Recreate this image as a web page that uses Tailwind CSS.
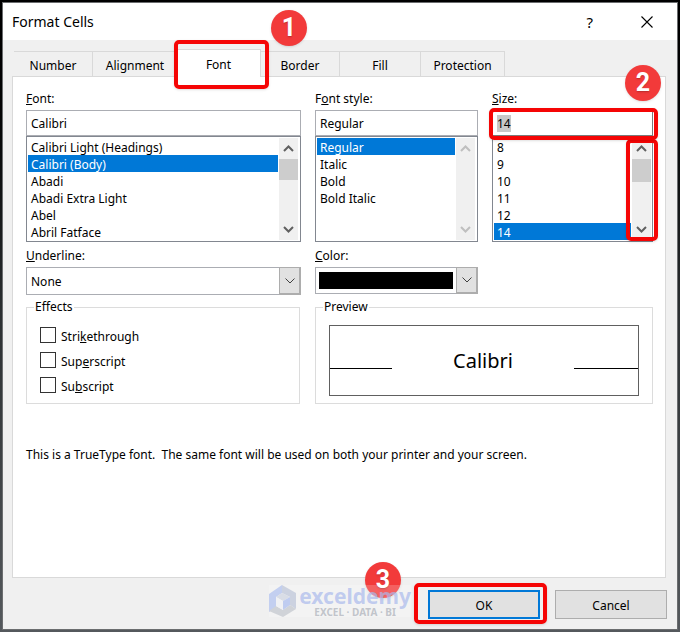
<!DOCTYPE html>
<html lang="en">
<head>
  <meta charset="UTF-8" />
  <meta name="viewport" content="width=device-width, initial-scale=1.0" />
  <title>Format Cells</title>
  <script src="https://cdn.jsdelivr.net/npm/@tailwindcss/browser@4"></script>
</head>
<body class="flex min-h-screen flex-col bg-linear-to-b from-black via-[#2c3032] to-[#55595d] p-[2px] font-['Noto_Sans',sans-serif] text-[12px] leading-[18px] text-black">

  <main class="flex flex-1 flex-col border border-[#6b6d6f] bg-[#f0f0f0]">

    <!-- Title bar -->
    <header class="flex h-[37px] items-center justify-between bg-white pl-[9px] pr-6">
      <h1 class="text-[14px]">Format Cells</h1>
      <div class="flex items-center gap-[48px]">
        <button type="button" class="text-[15px]" aria-label="Help">?</button>
        <button type="button" aria-label="Close">
          <svg class="size-3" viewBox="0 0 12 12" fill="none" stroke="black" stroke-width="1.1"><path d="M0.5 0.5 11.5 11.5M11.5 0.5 0.5 11.5" /></svg>
        </button>
      </div>
    </header>

    <!-- Tabs -->
    <div role="tablist" class="mt-[9px] flex h-[28px] items-end pl-[11px]">
      <button type="button" role="tab" class="h-[26px] w-[79px] border-t border-r border-[#d9d9d9] pt-[2px]">Number</button>
      <button type="button" role="tab" class="h-[26px] w-[84px] border-t border-[#d9d9d9] pt-[2px]">Alignment</button>
      <div class="relative z-10">
        <button type="button" role="tab" aria-selected="true" class="h-[28px] w-[84px] border-t border-r border-[#d9d9d9] bg-white pt-[2px]">Font</button>
        <span class="pointer-events-none absolute -top-[9px] -left-[3px] h-[49px] w-[95px] rounded-[5px] border-4 border-[#f50505] shadow"></span>
        <span class="absolute -top-[39px] left-[94px] flex size-9 items-center justify-center rounded-full bg-[#f23a3a] font-[Roboto,sans-serif] text-[25px] font-bold text-white shadow text-shadow-sm">1</span>
      </div>
      <button type="button" role="tab" class="h-[26px] w-[79px] border-t border-r border-[#d9d9d9] pt-[2px]">Border</button>
      <button type="button" role="tab" class="h-[26px] w-[81px] border-t border-r border-[#d9d9d9] pt-[2px]">Fill</button>
      <button type="button" role="tab" class="h-[26px] w-[84px] border-t border-r border-[#d9d9d9] pt-[2px]">Protection</button>
    </div>

    <!-- Font panel -->
    <section role="tabpanel" class="-mt-px mr-[11px] ml-[9px] flex-1 border border-[#d9d9d9] bg-white px-[12px] pt-[13px] pl-[13px]">
      <div class="grid grid-cols-[275fr_163fr_161fr] gap-x-[14px]">

        <div>
          <label for="fontName" class="block pb-[2px]"><u>F</u>ont:</label>
          <input id="fontName" type="text" value="Calibri" class="block h-[26px] w-full border border-[#abadb3] px-1" />
          <div class="flex border border-[#828790] p-px pr-[2px]">
            <select size="6" aria-label="Fonts" class="h-[102px] min-w-0 flex-1 appearance-none overflow-hidden">
              <option class="h-[17px] px-[3px] pt-px pb-0 leading-[17px]">Calibri Light (Headings)</option>
              <option selected class="h-[17px] px-[3px] pt-px pb-0 leading-[17px] checked:bg-[#0078d7] checked:bg-linear-to-b checked:from-[#0078d7] checked:to-[#0078d7] checked:text-white">Calibri (Body)</option>
              <option class="h-[17px] px-[3px] pt-px pb-0 leading-[17px]">Abadi</option>
              <option class="h-[17px] px-[3px] pt-px pb-0 leading-[17px]">Abadi Extra Light</option>
              <option class="h-[17px] px-[3px] pt-px pb-0 leading-[17px]">Abel</option>
              <option class="h-[17px] px-[3px] pt-px pb-0 leading-[17px]">Abril Fatface</option>
            </select>
            <div class="ml-px flex w-[19px] flex-col items-center bg-[#f0f0f0] text-[#606060]">
              <svg class="h-[21px] w-[11px]" viewBox="0 0 11 21" fill="none" stroke="currentColor" stroke-width="2"><path d="M1 13 5.5 8.5 10 13" /></svg>
              <div class="h-[21px] w-full bg-[#cdcdcd]"></div>
              <svg class="mt-auto h-[21px] w-[11px]" viewBox="0 0 11 21" fill="none" stroke="currentColor" stroke-width="2"><path d="M1 8 5.5 12.5 10 8" /></svg>
            </div>
          </div>
          <label for="underline" class="mt-[5px] block pb-[2px]"><u>U</u>nderline:</label>
          <div class="relative">
            <select id="underline" class="block h-[28px] w-full appearance-none border border-[#abadb3] px-1 pt-px">
              <option>None</option>
            </select>
            <span class="pointer-events-none absolute inset-y-0 right-0 flex w-[22px] items-center justify-center border border-r-2 border-b-2 border-[#adadad] bg-[#e1e1e1]">
              <svg class="h-[6px] w-[10px]" viewBox="0 0 10 6" fill="none" stroke="#404040"><path d="M0.5 0.5 5 5 9.5 0.5" /></svg>
            </span>
          </div>
        </div>

        <div>
          <label for="fontStyle" class="block pb-[2px]">F<u>o</u>nt style:</label>
          <input id="fontStyle" type="text" value="Regular" class="block h-[26px] w-full border border-[#abadb3] px-1" />
          <div class="flex border border-[#828790] p-px pr-[2px]">
            <select size="6" aria-label="Font styles" class="h-[102px] min-w-0 flex-1 appearance-none overflow-hidden">
              <option selected class="h-[17px] px-[3px] pt-px pb-0 leading-[17px] checked:bg-[#0078d7] checked:bg-linear-to-b checked:from-[#0078d7] checked:to-[#0078d7] checked:text-white">Regular</option>
              <option class="h-[17px] px-[3px] pt-px pb-0 leading-[17px]">Italic</option>
              <option class="h-[17px] px-[3px] pt-px pb-0 leading-[17px]">Bold</option>
              <option class="h-[17px] px-[3px] pt-px pb-0 leading-[17px]">Bold Italic</option>
            </select>
            <div class="ml-px flex w-[19px] flex-col items-center bg-[#f0f0f0] text-[#bfbfbf]">
              <svg class="h-[21px] w-[11px]" viewBox="0 0 11 21" fill="none" stroke="currentColor" stroke-width="2"><path d="M1 13 5.5 8.5 10 13" /></svg>
              <svg class="mt-auto h-[21px] w-[11px]" viewBox="0 0 11 21" fill="none" stroke="currentColor" stroke-width="2"><path d="M1 8 5.5 12.5 10 8" /></svg>
            </div>
          </div>
          <label for="color" class="mt-[5px] block pb-[2px]"><u>C</u>olor:</label>
          <div class="relative">
            <!-- the swatch is the select's own background, clipped to its content box -->
            <select id="color" class="block h-[27px] w-full appearance-none border border-[#abadb3] bg-black bg-clip-content py-[4px] pr-[24px] pl-[3px] text-black">
              <option></option>
            </select>
            <span class="pointer-events-none absolute inset-y-0 right-0 flex w-[22px] items-center justify-center border border-r-2 border-b-2 border-[#adadad] bg-[#e1e1e1]">
              <svg class="h-[6px] w-[10px]" viewBox="0 0 10 6" fill="none" stroke="#404040"><path d="M0.5 0.5 5 5 9.5 0.5" /></svg>
            </span>
          </div>
        </div>

        <div class="relative">
          <label for="size" class="block pb-[2px]"><u>S</u>ize:</label>
          <div class="relative">
            <input id="size" type="text" value="14" class="block h-[26px] w-full border border-[#7a7a7a] bg-linear-to-r from-[#c8c8c8] to-[#c8c8c8] bg-size-[14px_17px] bg-position-[4px_4px] bg-no-repeat px-1" />
            <span class="pointer-events-none absolute -top-[2px] -right-[5px] -bottom-[4px] -left-[3px] z-10 rounded-[5px] border-4 border-[#f50505] shadow"></span>
          </div>
          <div class="relative flex border border-[#828790] p-px">
            <select size="6" aria-label="Sizes" class="h-[102px] min-w-0 flex-1 appearance-none overflow-hidden">
              <option class="h-[17px] px-[3px] pt-px pb-0 leading-[17px]">8</option>
              <option class="h-[17px] px-[3px] pt-px pb-0 leading-[17px]">9</option>
              <option class="h-[17px] px-[3px] pt-px pb-0 leading-[17px]">10</option>
              <option class="h-[17px] px-[3px] pt-px pb-0 leading-[17px]">11</option>
              <option class="h-[17px] px-[3px] pt-px pb-0 leading-[17px]">12</option>
              <option selected class="h-[17px] px-[3px] pt-px pb-0 leading-[17px] checked:bg-[#0078d7] checked:bg-linear-to-b checked:from-[#0078d7] checked:to-[#0078d7] checked:text-white">14</option>
            </select>
            <div class="ml-px flex w-[19px] flex-col items-center bg-[#f0f0f0] text-[#606060]">
              <svg class="h-[21px] w-[11px]" viewBox="0 0 11 21" fill="none" stroke="currentColor" stroke-width="2"><path d="M1 13 5.5 8.5 10 13" /></svg>
              <div class="h-[23px] w-full bg-[#cdcdcd]"></div>
              <svg class="mt-auto h-[21px] w-[11px]" viewBox="0 0 11 21" fill="none" stroke="currentColor" stroke-width="2"><path d="M1 8 5.5 12.5 10 8" /></svg>
            </div>
            <span class="pointer-events-none absolute top-[2px] -right-[6px] bottom-0 w-[32px] rounded-[5px] border-4 border-[#f50505] shadow"></span>
          </div>
          <span class="absolute -top-[25px] -right-[8px] flex size-9 items-center justify-center rounded-full bg-[#f23a3a] font-[Roboto,sans-serif] text-[25px] font-bold text-white shadow text-shadow-sm">2</span>
        </div>

        <fieldset class="mt-[3px] mr-px border border-[#dcdcdc] px-[13px] pt-[11px] pb-[9px]">
          <legend class="-ml-[6px] px-px">Effects</legend>
          <div class="flex flex-col gap-[9px]">
            <label class="flex h-4 items-center gap-[5px]"><input type="checkbox" class="size-4 appearance-none border border-[#333] bg-white" /><span class="pt-[3px]">Stri<u>k</u>ethrough</span></label>
            <label class="flex h-4 items-center gap-[5px]"><input type="checkbox" class="size-4 appearance-none border border-[#333] bg-white" /><span class="pt-[3px]">Sup<u>e</u>rscript</span></label>
            <label class="flex h-4 items-center gap-[5px]"><input type="checkbox" class="size-4 appearance-none border border-[#333] bg-white" /><span class="pt-[3px]">Su<u>b</u>script</span></label>
          </div>
        </fieldset>

        <fieldset class="col-span-2 mt-[3px] border border-[#dcdcdc] px-[13px] pt-[9px] pb-[7px]">
          <legend class="-ml-[6px] px-px">Preview</legend>
          <div class="flex h-[71px] justify-between border border-[#606060]">
            <div class="h-[43px] w-[62px] border-b border-black"></div>
            <div class="self-center text-[20px]">Calibri</div>
            <div class="h-[43px] w-[64px] border-b border-black"></div>
          </div>
        </fieldset>
      </div>

      <p class="mt-[42px] whitespace-pre-wrap">This is a TrueType font.  The same font will be used on both your printer and your screen.</p>
    </section>

    <!-- Footer -->
    <footer class="flex h-[51px] items-start justify-end gap-[15px] pt-[12px] pr-[10px]">
      <div class="relative">
        <span class="absolute -top-[28px] -left-[63px] flex size-9 items-center justify-center rounded-full bg-[#f23a3a] font-[Roboto,sans-serif] text-[25px] font-bold text-white shadow text-shadow-sm">3</span>
        <!-- Watermark -->
        <div class="absolute -top-[5px] right-[129px] flex h-8 items-center gap-[3px] bg-white/20">
          <svg class="h-8 w-[27px]" viewBox="0 0 27 32">
            <path fill="#c3cff0" d="M0 9 13 0v8L7 12v10l-7 5z" />
            <path fill="#ccd2e0" d="M13 0 27 8v16l-6-4v-8l-8-4z" />
            <path fill="#d0d3d8" d="M0 26 7 21l7 4 7-5 6 4-13 8z" />
            <path fill="#d9dde6" d="M7 12 13 8l8 4-7 4z" />
            <path fill="#f0f1f4" d="M7 12 14 16v9l-7-4z" />
            <path fill="#bfccf0" d="M14 16 21 12v8l-7 5z" />
          </svg>
          <div class="flex flex-col items-center gap-px font-['Noto_Sans',sans-serif] font-bold">
            <span class="text-[21px] leading-[20px] text-[#a9b9ec]/70">exceldemy</span>
            <span class="text-[10px] leading-[10px] text-[#b4b8c0]/80">EXCEL · DATA · BI</span>
          </div>
        </div>
        <button type="submit" class="block h-[29px] w-[112px] border-2 border-[#0078d7] bg-[#e1e1e1] pt-[2px]">OK</button>
        <span class="pointer-events-none absolute -top-[7px] -right-[7px] -bottom-[5px] -left-[14px] rounded-[5px] border-4 border-[#f50505] shadow"></span>
      </div>
      <button type="button" class="h-[29px] w-[112px] border border-[#adadad] bg-[#e1e1e1] pt-[2px]">Cancel</button>
    </footer>
  </main>

</body>
</html>
